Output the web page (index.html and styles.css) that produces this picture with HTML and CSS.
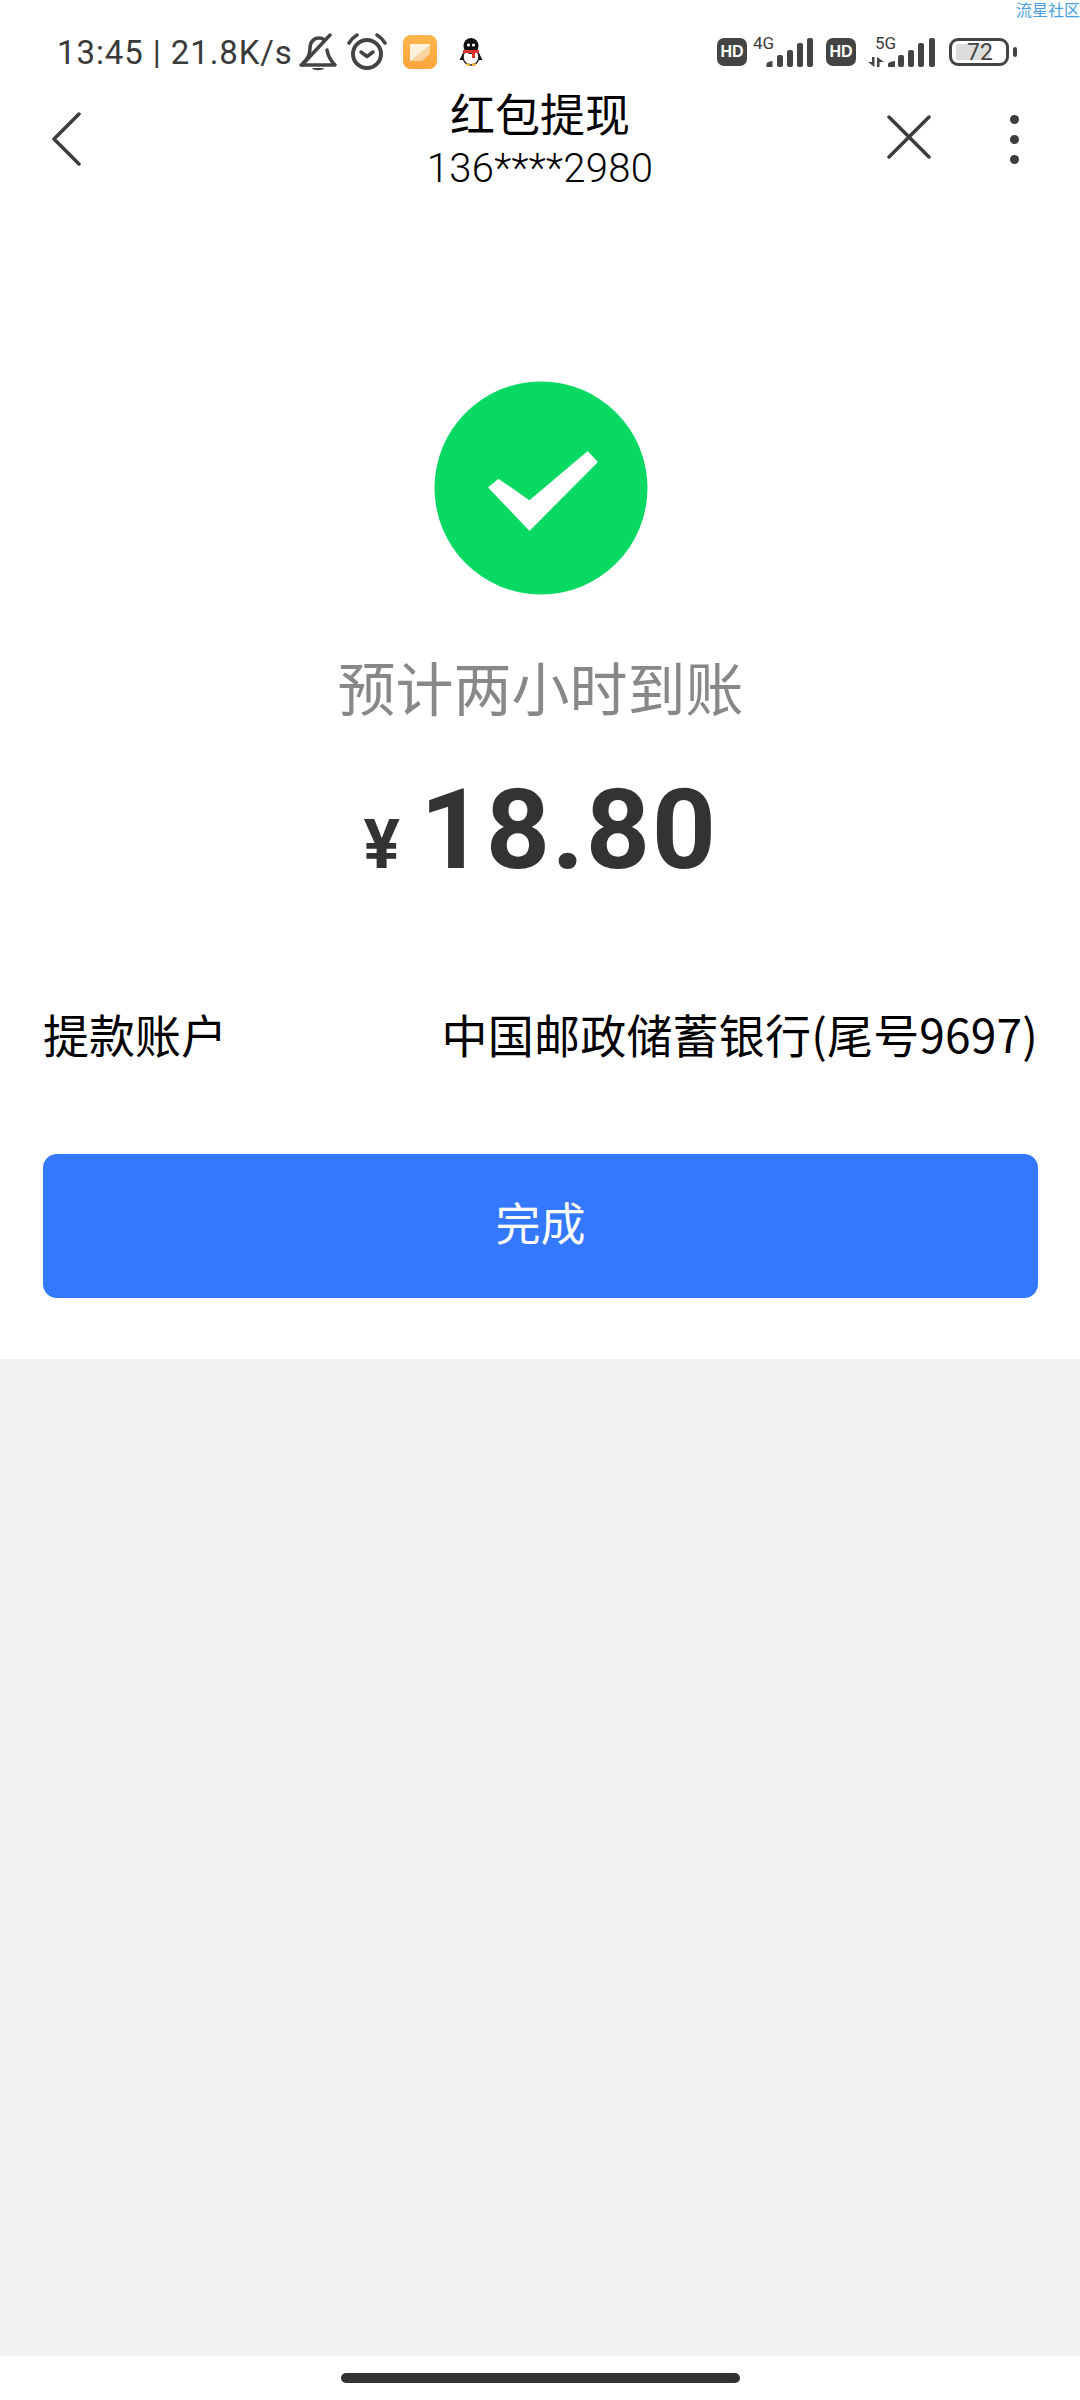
FILE: index.html
```html
<!DOCTYPE html>
<html>
  <head>
    <title>红包提现</title>
    <link rel="stylesheet" href="styles.css">
  </head>
  <body>
    <div class="watermark">流星社区</div>

    <div class="status-bar">
      <div class="status-left">
        <span class="status-text">13:45 | 21.8K/s</span>
        <svg class="icon-bell" width="38" height="38" viewBox="0 0 38 38">
          <path d="M2 32 H36 C31 27 29 23 28 17 M4 30 C9 26 11 22 11 15 C11 9 15 5 20 5 C22 5 24 5.500 25 6.500" fill="none" stroke="#444" stroke-width="3.500" stroke-linecap="round" stroke-linejoin="round"/>
          <path d="M3 32 L31 2" stroke="#444" stroke-width="3.500" stroke-linecap="round"/>
          <path d="M13 35 H25 C24 38 14 38 13 35 Z" fill="#444"/>
        </svg>
        <svg class="icon-alarm" width="40" height="38" viewBox="0 0 40 38">
          <circle cx="20" cy="21" r="14" fill="none" stroke="#444" stroke-width="4"/>
          <path d="M14 19 L20 23.500 L26 19" fill="none" stroke="#444" stroke-width="3.500" stroke-linecap="round" stroke-linejoin="round"/>
          <path d="M2 10 Q5 5 10 2 M38 10 Q35 5 30 2" fill="none" stroke="#444" stroke-width="3.500" stroke-linecap="round"/>
        </svg>
        <svg class="icon-note" width="34" height="34" viewBox="0 0 34 34">
          <defs>
            <linearGradient id="note-bg" x1="0" y1="0" x2="0" y2="1">
              <stop offset="0" stop-color="#fdb44c"/>
              <stop offset="1" stop-color="#fba53b"/>
            </linearGradient>
          </defs>
          <rect width="34" height="34" rx="8" fill="url(#note-bg)"/>
          <path d="M7 9 H27 V18 L19 26 H7 Z" fill="#fef1dc"/>
          <path d="M7 26 L27 10 V18 L19 26 Z" fill="#fad3a0"/>
        </svg>
        <svg class="icon-qq" width="24" height="28" viewBox="0 0 24 28">
          <ellipse cx="12" cy="19" rx="8" ry="8" fill="#fff" stroke="#222" stroke-width="1.500"/>
          <path d="M4 15 L0.500 22 L4 22 Z M20 15 L23.500 22 L20 22 Z" fill="#111"/>
          <ellipse cx="12" cy="8" rx="7.500" ry="8" fill="#111"/>
          <circle cx="9.500" cy="7" r="1.600" fill="#fff"/>
          <circle cx="14.500" cy="7" r="1.600" fill="#fff"/>
          <path d="M4 12 H20 V15 H16 V20 H13 V15 H4 Z" fill="#e0322d"/>
          <path d="M7 26.500 H11 M13 26.500 H17" stroke="#f5b921" stroke-width="2"/>
        </svg>
      </div>
      <div class="status-right">
        <span class="hd">HD</span>
        <span class="net net-4g">
          <span class="net-label">4G</span>
          <svg width="47" height="29" viewBox="0 0 47 29">
            <path d="M0.500 29 V26 Q0.500 24 6.500 23 V29 Z" fill="#444"/>
            <rect x="11" y="17" width="6" height="12" rx="2" fill="#444"/>
            <rect x="21" y="12" width="6" height="17" rx="2" fill="#444"/>
            <rect x="31" y="5" width="6" height="24" rx="2" fill="#444"/>
            <rect x="41" y="0" width="6" height="29" rx="2" fill="#444"/>
          </svg>
        </span>
        <span class="hd">HD</span>
        <span class="net net-5g">
          <span class="net-label">5G</span>
          <svg width="67" height="29" viewBox="0 0 67 29">
            <path d="M4 19 H6.500 V29 L0 24 H4 Z" fill="#444"/>
            <path d="M9 19 L16 24 H11.500 V29 H9 Z" fill="#444"/>
            <path d="M20 29 V26 Q20 24 27 23 V29 Z" fill="#444"/>
            <rect x="30" y="17" width="6" height="12" rx="2" fill="#444"/>
            <rect x="40" y="12" width="6" height="17" rx="2" fill="#444"/>
            <rect x="50" y="5" width="6" height="24" rx="2" fill="#444"/>
            <rect x="61" y="0" width="6" height="29" rx="2" fill="#444"/>
          </svg>
        </span>
        <span class="battery">
          <span class="battery-body">
            <span class="battery-fill"></span>
            <span class="battery-num">72</span>
          </span>
          <span class="battery-nub"></span>
        </span>
      </div>
    </div>

    <div class="header">
      <div class="header-left">
        <svg width="30" height="54" viewBox="0 0 30 54">
          <path d="M28 2 L3 27 L28 52" fill="none" stroke="#3c3c3c" stroke-width="3.500" stroke-linecap="round" stroke-linejoin="round"/>
        </svg>
      </div>
      <div class="header-title">
        <div class="title">红包提现</div>
        <div class="phone">136****2980</div>
      </div>
      <div class="header-right">
        <svg class="close" width="44" height="44" viewBox="0 0 44 44">
          <path d="M2 2 L42 42 M42 2 L2 42" stroke="#3c3c3c" stroke-width="3.500" stroke-linecap="round"/>
        </svg>
        <div class="more">
          <span class="dot"></span>
          <span class="dot"></span>
          <span class="dot"></span>
        </div>
      </div>
    </div>

    <div class="result">
      <svg class="check" width="214" height="214" viewBox="0 0 214 214">
        <circle cx="107" cy="107" r="106.500" fill="#07d962"/>
        <path d="M55.500 106.500 L64.500 99 L95.500 120.500 L153.500 71.500 L162.500 81 L95.500 148.500 Z" fill="#fff" stroke="#fff" stroke-width="2" stroke-linejoin="round"/>
      </svg>
      <div class="result-text">预计两小时到账</div>
      <div class="amount">
        <span class="yen">¥</span>
        <span class="value">18.80</span>
      </div>
      <div class="account-row">
        <span>提款账户</span>
        <span class="account-name">中国邮政储蓄银行(尾号9697)</span>
      </div>
      <button class="done-btn">完成</button>
    </div>

    <div class="filler"></div>

    <div class="nav-bar"><div class="home-bar"></div></div>
  </body>
</html>
```

FILE: styles.css
```css
* {
  box-sizing: border-box;
}
body {
  margin: 0;
  width: 1080px;
  height: 2400px;
  background-color: #fff;
  display: flex;
  flex-direction: column;
  position: relative;
  overflow: hidden;
  font-family: "Noto Sans CJK SC", "Noto Sans", sans-serif;
  color: #000;
}
.watermark {
  position: absolute;
  top: 0;
  right: 0;
  font-size: 16px;
  line-height: 18px;
  color: #4a9fe0;
}

.status-bar {
  height: 78px;
  padding: 33px 63px 0 57px;
  display: flex;
  justify-content: space-between;
  align-items: flex-start;
  color: #3a3a3a;
}
.status-left {
  display: flex;
  align-items: center;
  height: 38px;
}
.status-text {
  font-family: Roboto, sans-serif;
  font-size: 33px;
  letter-spacing: 0.9px;
  width: 242px;
  white-space: nowrap;
}
.icon-alarm {
  margin-left: 10px;
}
.icon-note {
  margin-left: 16px;
}
.icon-qq {
  margin-left: 22px;
}
.status-right {
  display: flex;
  align-items: flex-start;
  margin-top: 5px;
}
.hd {
  width: 30px;
  height: 28px;
  border-radius: 7px;
  background-color: #444;
  color: #fff;
  font-family: "Liberation Sans", sans-serif;
  font-weight: bold;
  font-size: 16px;
  line-height: 28px;
  text-align: center;
}
.net {
  display: flex;
  align-items: flex-end;
  height: 29px;
  position: relative;
  width: 79px;
}
.net-4g {
  padding-left: 19px;
}
.net-5g {
  padding-left: 12px;
}
.net-label {
  position: absolute;
  top: -5px;
  font-family: Roboto, sans-serif;
  font-size: 17px;
  line-height: 20px;
}
.net-4g .net-label {
  left: 6px;
}
.net-5g .net-label {
  left: 19px;
}
.battery {
  display: flex;
  align-items: center;
  margin-left: 14px;
  height: 28px;
}
.battery-body {
  width: 60px;
  height: 28px;
  border: 3.5px solid #444;
  border-radius: 9px;
  position: relative;
  display: flex;
  align-items: center;
  justify-content: center;
}
.battery-fill {
  position: absolute;
  left: 4px;
  top: 3px;
  bottom: 3px;
  width: 34px;
  border-radius: 2px;
  background-color: #ddd;
}
.battery-num {
  position: relative;
  left: 1px;
  font-family: Roboto, sans-serif;
  font-size: 23px;
  line-height: 21px;
  color: #444;
}
.battery-nub {
  width: 4px;
  height: 10px;
  margin-left: 4px;
  border-radius: 2px;
  background-color: #444;
}

.header {
  height: 122px;
  padding: 0 51px;
  display: grid;
  grid-template-columns: 1fr auto 1fr;
  align-items: center;
}
.header-left svg {
  display: block;
}
.header-title {
  text-align: center;
}
.title {
  font-size: 45px;
  line-height: 60px;
}
.phone {
  font-family: Roboto, sans-serif;
  font-weight: 300;
  font-size: 40px;
  line-height: 52px;
  letter-spacing: 0.3px;
}
.header-right {
  display: flex;
  align-items: center;
  justify-content: flex-end;
  gap: 79px;
  padding-right: 10px;
}
.close {
  margin-bottom: 4px;
}
.more {
  display: flex;
  flex-direction: column;
  gap: 11px;
}
.dot {
  width: 9px;
  height: 9px;
  border-radius: 50%;
  background-color: #3c3c3c;
}

.result {
  height: 1159px;
  padding: 181px 42px 0 43px;
  display: flex;
  flex-direction: column;
  align-items: center;
}
.check {
  display: block;
}
.result-text {
  margin-top: 53px;
  font-size: 58px;
  line-height: 76px;
  color: #888;
}
.amount {
  margin-top: 41px;
  height: 130px;
  display: flex;
  align-items: baseline;
  gap: 20px;
  font-family: Roboto, sans-serif;
  font-weight: bold;
  color: #333;
}
.yen {
  font-size: 68px;
}
.value {
  font-size: 112px;
  line-height: 130px;
  letter-spacing: 1.6px;
}
.account-row {
  width: 100%;
  margin-top: 107px;
  display: flex;
  justify-content: space-between;
  font-size: 46px;
  line-height: 62px;
}
.account-name {
  letter-spacing: 0.2px;
}
.done-btn {
  width: 100%;
  height: 144px;
  margin-top: 90px;
  padding-bottom: 10px;
  border: none;
  border-radius: 14px;
  background-color: #3478ff;
  color: white;
  font-family: inherit;
  font-size: 45px;
}

.filler {
  height: 997px;
  background-color: #f2f2f2;
}
.nav-bar {
  flex-grow: 1;
  padding-top: 17px;
  display: flex;
  justify-content: center;
}
.home-bar {
  width: 399px;
  height: 10px;
  border-radius: 5px;
  background-color: #333;
}
```
